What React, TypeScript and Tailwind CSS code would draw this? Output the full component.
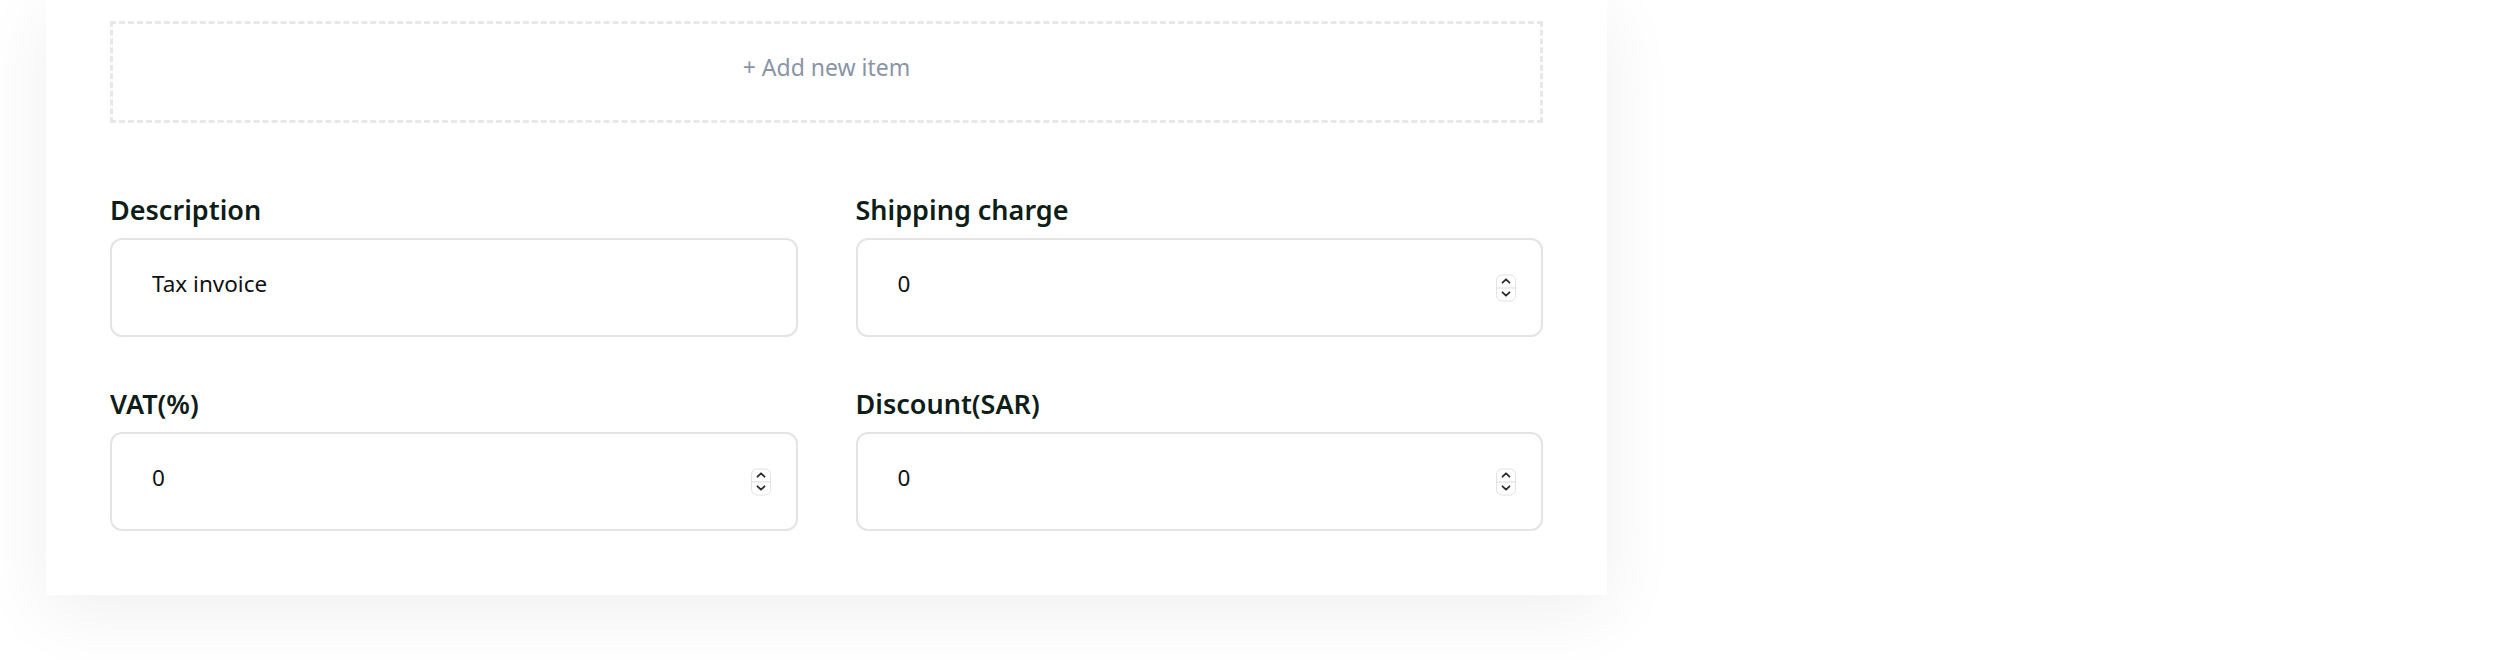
import { useState } from 'react'

type Field = {
  id: string
  label: string
  value: string
  numeric?: boolean
}

const FIELDS: Field[] = [
  { id: 'description', label: 'Description', value: 'Tax invoice' },
  { id: 'shipping', label: 'Shipping charge', value: '0', numeric: true },
  { id: 'vat', label: 'VAT(%)', value: '0', numeric: true },
  { id: 'discount', label: 'Discount(SAR)', value: '0', numeric: true },
]

function Spinner() {
  return (
    <div className="pointer-events-none absolute right-[27px] top-1/2 flex h-[27px] w-[20px] -translate-y-1/2 flex-col overflow-hidden rounded-[6px] border border-[#e2e2e2] bg-white">
      <div className="flex flex-1 items-center justify-center border-b border-[#dcdcdc]">
        <svg width="10" height="7" viewBox="0 0 10 7" fill="none" aria-hidden="true">
          <path d="M1.5 5.2 5 1.8l3.5 3.4" stroke="#2b2b2b" strokeWidth="1.8" strokeLinecap="round" strokeLinejoin="round" />
        </svg>
      </div>
      <div className="flex flex-1 items-center justify-center">
        <svg width="10" height="7" viewBox="0 0 10 7" fill="none" aria-hidden="true">
          <path d="M1.5 1.8 5 5.2l3.5-3.4" stroke="#2b2b2b" strokeWidth="1.8" strokeLinecap="round" strokeLinejoin="round" />
        </svg>
      </div>
    </div>
  )
}

export default function App() {
  const [values, setValues] = useState<Record<string, string>>(
    Object.fromEntries(FIELDS.map((f) => [f.id, f.value]))
  )

  return (
    <div className="min-h-[660px] bg-white pl-[46px] font-['Noto_Sans',sans-serif]">
      <div className="w-[1561px] bg-white px-16 pb-[64px] pt-[21px] shadow-[0_16px_70px_rgba(0,0,0,0.065)]">
        {/* Add item */}
        <button
          type="button"
          className="flex h-[102px] w-full items-center justify-center border-[3px] border-dashed border-[#e8e8e8] pb-[10px] text-[23px] text-[#8a94a6]"
        >
          + Add new item
        </button>

        {/* Totals */}
        <div className="mt-[69px] grid grid-cols-2 gap-x-[58px] gap-y-[49px]">
          {FIELDS.map((f) => (
            <div key={f.id}>
              <label htmlFor={f.id} className="block text-[27px] font-semibold leading-9 text-[#0e1d17]">
                {f.label}
              </label>
              <div className="relative mt-[10px]">
                <input
                  id={f.id}
                  type={f.numeric ? 'number' : 'text'}
                  value={values[f.id]}
                  onChange={(e) => setValues((prev) => ({ ...prev, [f.id]: e.target.value }))}
                  className="h-[99px] w-full appearance-none rounded-xl border-2 border-[#e4e4e4] bg-white pb-[8px] pl-10 pr-16 text-[22.5px] text-[#111] outline-none [&::-webkit-inner-spin-button]:appearance-none [&::-webkit-outer-spin-button]:appearance-none"
                />
                {f.numeric && <Spinner />}
              </div>
            </div>
          ))}
        </div>
      </div>
    </div>
  )
}
